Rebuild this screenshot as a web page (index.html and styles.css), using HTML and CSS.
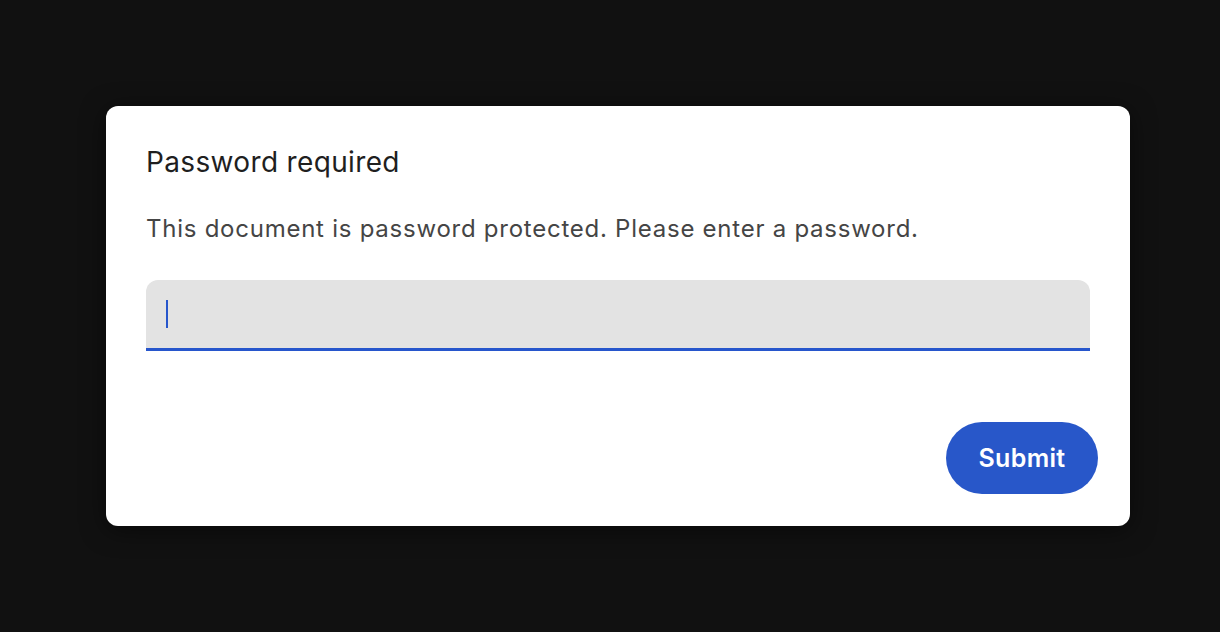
FILE: index.html
```html
<!DOCTYPE html>
<html>
<head>
<meta charset="utf-8">
<link rel="stylesheet" href="styles.css">
</head>
<body>
<div class="page">
  <div class="dialog">
    <div class="content">
      <h1 class="title">Password required</h1>
      <p class="message">This document is password protected. Please enter a password.</p>
      <div class="field"><span class="caret"></span></div>
    </div>
    <div class="actions">
      <button class="submit">Submit</button>
    </div>
  </div>
</div>
</body>
</html>
```
FILE: styles.css
```css
html, body {
  margin: 0;
  padding: 0;
  background: #111111;
  font-family: Inter, "Noto Sans", sans-serif;
}
.page {
  width: 1220px;
  height: 632px;
  display: flex;
  justify-content: flex-start;
  padding: 106px 0 0 106px;
  box-sizing: border-box;
}
.dialog {
  width: 1024px;
  height: 420px;
  background: #ffffff;
  border-radius: 12px;
  box-shadow: 0 4px 24px rgba(0, 0, 0, 0.5);
  box-sizing: border-box;
  display: flex;
  flex-direction: column;
  justify-content: space-between;
}
.content {
  padding: 40px 40px 0 40px;
}
.title {
  margin: 0;
  font-size: 28px;
  font-weight: 400;
  line-height: 32px;
  letter-spacing: 0.35px;
  color: #1f1f1f;
}
.message {
  margin: 37px 0 0 0;
  font-size: 24px;
  line-height: 28px;
  letter-spacing: 0.75px;
  color: #454545;
}
.field {
  margin-top: 37px;
  height: 71px;
  box-sizing: border-box;
  background: #e3e3e3;
  border-radius: 12px 12px 0 0;
  border-bottom: 3px solid #2756cc;
  display: flex;
  align-items: center;
  padding-left: 20px;
}
.caret {
  width: 2px;
  height: 28px;
  background: #2756cc;
}
.actions {
  display: flex;
  justify-content: flex-end;
  padding: 0 32px 32px 0;
}
.submit {
  width: 152px;
  height: 72px;
  border: none;
  border-radius: 36px;
  background: #2857c9;
  color: #ffffff;
  font-family: Inter, "Noto Sans", sans-serif;
  font-size: 25px;
  font-weight: 600;
  letter-spacing: 0.3px;
}
```
